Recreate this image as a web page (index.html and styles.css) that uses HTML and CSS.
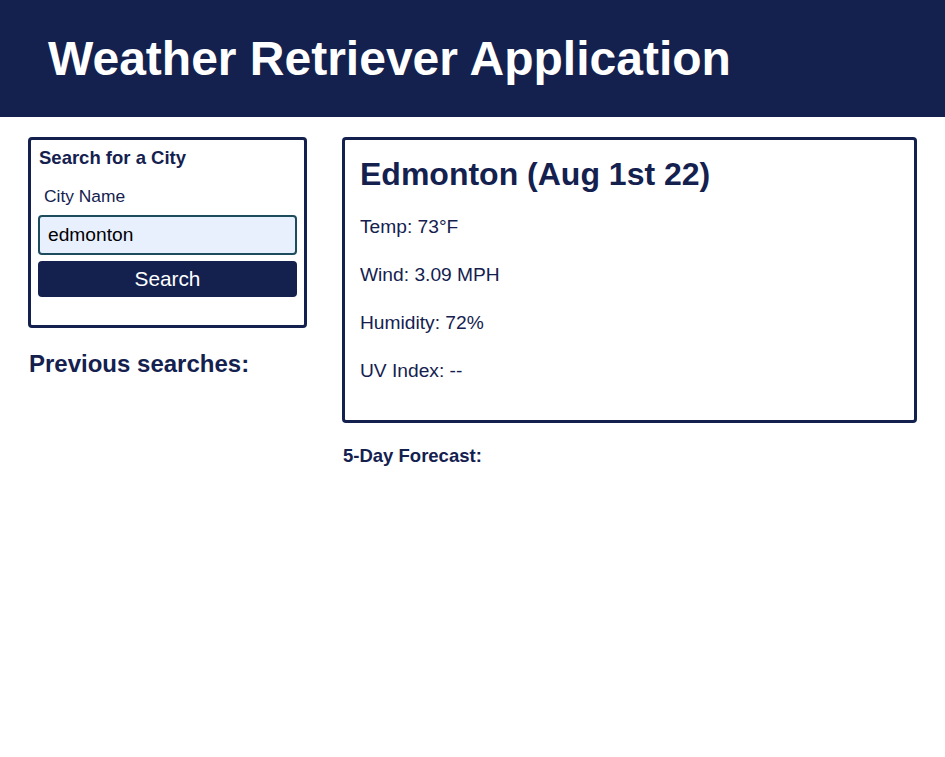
FILE: index.html
```html
<!DOCTYPE html>
<html lang="en">
<head>
<meta charset="utf-8">
<title>Weather Retriever Application</title>
<link rel="stylesheet" href="styles.css">
</head>
<body>
<header class="site-header">
  <h1 class="site-title">Weather Retriever Application</h1>
</header>
<main class="layout">
  <aside class="sidebar">
    <form class="search-box">
      <h2 class="search-title">Search for a City</h2>
      <label class="city-label" for="city">City Name</label>
      <input class="city-input" id="city" type="text" value="edmonton">
      <button class="search-btn" type="button">Search</button>
    </form>
    <h2 class="prev-title">Previous searches:</h2>
  </aside>
  <section class="content">
    <div class="current-card">
      <h2 class="city-heading">Edmonton (Aug 1st 22)</h2>
      <p class="stat">Temp: 73°F</p>
      <p class="stat">Wind: 3.09 MPH</p>
      <p class="stat">Humidity: 72%</p>
      <p class="stat">UV Index: --</p>
    </div>
    <h3 class="forecast-title">5-Day Forecast:</h3>
  </section>
</main>
</body>
</html>
```
FILE: styles.css
```css
* { box-sizing: border-box; }
body {
  margin: 0;
  font-family: "Liberation Sans", Arial, sans-serif;
  color: #14214f;
  background: #fff;
}
.site-header {
  background: #14214f;
  height: 117px;
  display: flex;
  align-items: center;
  padding: 0 48px;
}
.site-title {
  margin: 0;
  color: #fff;
  font-size: 48px;
  font-weight: bold;
}
.layout {
  display: grid;
  grid-template-columns: 279px 1fr;
  gap: 35px;
  padding: 20px 28px;
}
.search-box {
  border: 3px solid #14214f;
  border-radius: 4px;
  padding: 7px 7px 28px;
  display: flex;
  flex-direction: column;
}
.search-title {
  margin: 0 0 0 1px;
  font-size: 18.5px;
  font-weight: bold;
}
.city-label {
  font-size: 17.4px;
  margin: 17px 0 8px 6px;
}
.city-input {
  height: 40px;
  border: 2px solid #1d4d5c;
  border-radius: 4px;
  background: #e8f0fe;
  font-family: inherit;
  font-size: 19.2px;
  padding: 0 8px;
  color: #000;
  outline: none;
}
.search-btn {
  margin-top: 6px;
  height: 36px;
  border: none;
  border-radius: 4px;
  background: #14214f;
  color: #fff;
  font-family: inherit;
  font-size: 20.8px;
}
.prev-title {
  margin: 22px 0 0 1px;
  font-size: 24px;
  font-weight: bold;
}
.current-card {
  border: 3px solid #14214f;
  border-radius: 4px;
  padding: 16px 15px 25px;
}
.city-heading {
  margin: 0 0 10px;
  font-size: 32px;
  font-weight: bold;
}
.stat {
  margin: 0;
  font-size: 19.2px;
  line-height: 48px;
}
.forecast-title {
  margin: 22px 0 0 1px;
  font-size: 18.5px;
  font-weight: bold;
}
```
